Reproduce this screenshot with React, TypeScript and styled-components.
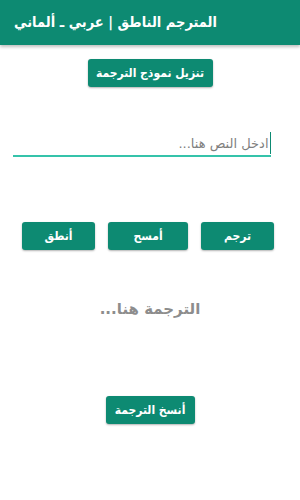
import styled, { createGlobalStyle } from "styled-components";

const GlobalStyle = createGlobalStyle`
  html, body {
    margin: 0;
    padding: 0;
    background: #ffffff;
  }
  body {
    font-family: "DejaVu Sans", "Noto Sans", sans-serif;
  }
`;

const Page = styled.div`
  width: 300px;
  min-height: 500px;
  display: flex;
  flex-direction: column;
  align-items: center;
  direction: rtl;
  background: #ffffff;
`;

const Header = styled.header`
  align-self: stretch;
  height: 43px;
  display: flex;
  align-items: center;
  justify-content: flex-end;
  padding: 0 14px 2px;
  background: #0d8a72;
  box-shadow: 0 2px 3px rgba(0, 0, 0, 0.25);
`;

const Title = styled.h1`
  margin: 0;
  color: #ffffff;
  font-family: "DejaVu Sans Condensed", "DejaVu Sans", sans-serif;
  font-stretch: condensed;
  font-size: 14.5px;
  font-weight: 700;
  white-space: nowrap;
`;

const Button = styled.button<{ $w: number }>`
  width: ${({ $w }) => $w}px;
  height: 28px;
  padding: 0;
  border: none;
  border-radius: 3px;
  background: #0d8a72;
  color: #ffffff;
  font-family: "DejaVu Sans Condensed", "DejaVu Sans", sans-serif;
  font-stretch: condensed;
  font-size: 12px;
  font-weight: 700;
  white-space: nowrap;
  box-shadow: 0 1px 2px rgba(0, 0, 0, 0.3);
  cursor: pointer;
`;

const DownloadButton = styled(Button)`
  margin-top: 14px;
`;

const Field = styled.div`
  margin-top: 44px;
  margin-right: 16px;
  width: 258px;
  height: 24px;
  display: flex;
  align-items: center;
  border-bottom: 2px solid #35c3aa;
`;

const Caret = styled.span`
  width: 1.5px;
  height: 22px;
  background: #0d8a72;
`;

const Placeholder = styled.span`
  color: #7f7f7f;
  font-size: 13px;
  padding-right: 1px;
`;

const ActionRow = styled.div`
  margin-top: 65px;
  margin-right: 4px;
  display: flex;
  gap: 13px;
`;

const Output = styled.p`
  margin: 50px 0 0;
  color: #8d8d8d;
  font-size: 15px;
  font-weight: 700;
`;

const CopyButton = styled(Button)`
  margin-top: 78px;
`;

export default function App() {
  return (
    <>
      <GlobalStyle />
      <Page>
        <Header>
          <Title>المترجم الناطق | عربي ـ ألماني</Title>
        </Header>
        <DownloadButton $w={125}>تنزيل نموذج الترجمة</DownloadButton>
        <Field>
          <Caret />
          <Placeholder>ادخل النص هنا...</Placeholder>
        </Field>
        <ActionRow>
          <Button $w={73}>ترجم</Button>
          <Button $w={80}>أمسح</Button>
          <Button $w={73}>أنطق</Button>
        </ActionRow>
        <Output>الترجمة هنا...</Output>
        <CopyButton $w={89}>أنسخ الترجمة</CopyButton>
      </Page>
    </>
  );
}
